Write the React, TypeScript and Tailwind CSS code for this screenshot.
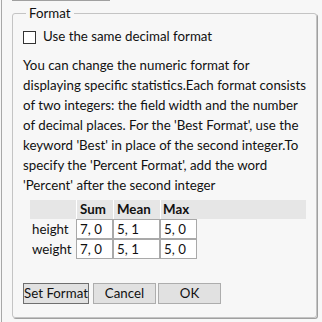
const rows = [
  { label: 'height', values: ['7, 0', '5, 1', '5, 0'] },
  { label: 'weight', values: ['7, 0', '5, 1', '5, 0'] },
];

const colWidths = ['w-[37px]', 'w-[47px]', 'w-[37px]'];

const helpLines = [
  'You can change the numeric format for',
  'displaying specific statistics.Each format consists',
  'of two integers: the field width and the number',
  "of decimal places. For the 'Best Format', use the",
  "keyword 'Best' in place of the second integer.To",
  "specify the 'Percent Format', add the word",
  "'Percent' after the second integer",
];

export default function App() {
  return (
    <div className="w-[322px] h-[322px] bg-[#f7f7f7] overflow-hidden font-['Lato',sans-serif] text-[13.3px] text-[#111]">
      <div className="ml-[1px] h-full border-l border-[#a8a8a8]">
        <div className="ml-[10px] h-px w-[98px] bg-[#a0a0a0]" />
        <fieldset className="mt-[3px] ml-[10px] w-[305px] h-[314px] border border-[#c4c4c4] rounded-[3px] shadow-[1px_1px_0_#a0a0a0] px-[10px]">
          <legend className="ml-[3px] px-[3px] leading-[18px]">Format</legend>

          <label className="mt-[5px] flex items-center h-[20px] gap-[7px]">
            <span className="w-[13px] h-[13px] border border-[#333] bg-white" />
            <span>Use the same decimal format</span>
          </label>

          <p className="mt-[8px] leading-[20px] whitespace-nowrap">
            {helpLines.map((l) => (
              <span key={l} className="block">
                {l}
              </span>
            ))}
          </p>

          <div className="mt-[5px] ml-[7px] flex flex-col">
            <div className="flex h-[19px] bg-[#e6e6e6] font-bold leading-[19px]">
              <div className="w-[46px]" />
              <div className="w-[37px] border-l border-white pl-[3px]">Sum</div>
              <div className="w-[47px] border-l border-white pl-[3px]">Mean</div>
              <div className="w-[37px] border-l border-white pl-[2px]">Max</div>
            </div>
            {rows.map((r) => (
              <div key={r.label} className="flex h-[20px]">
                <div className="w-[46px] pl-[2px] leading-[20px]">{r.label}</div>
                {r.values.map((v, i) => (
                  <div
                    key={i}
                    className={`${colWidths[i]} border border-[#a9a9a9] bg-white pl-[3px] leading-[18px]`}
                  >
                    {v}
                  </div>
                ))}
              </div>
            ))}
          </div>

          <div className="mt-[24px] flex">
            <button className="w-[66px] h-[21px] bg-[#e1e1e1] border border-[#6f6f6f] leading-[19px] whitespace-nowrap">
              Set Format
            </button>
            <button className="ml-[4px] w-[63px] h-[21px] bg-[#e1e1e1] border border-[#adadad] leading-[19px]">
              Cancel
            </button>
            <button className="ml-[2px] w-[63px] h-[21px] bg-[#e1e1e1] border border-[#adadad] leading-[19px]">
              OK
            </button>
          </div>
        </fieldset>
      </div>
    </div>
  );
}
